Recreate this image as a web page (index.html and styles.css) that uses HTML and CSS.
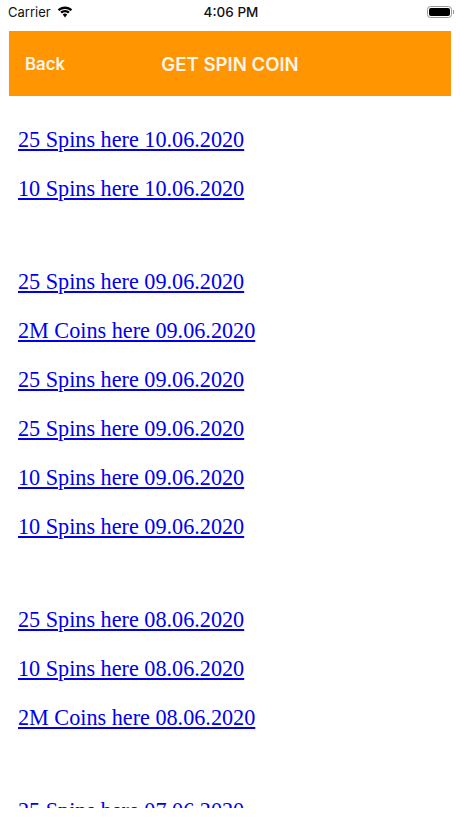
FILE: index.html
```html
<!DOCTYPE html>
<html lang="en">
<head>
    <meta charset="UTF-8">
    <meta name="viewport" content="width=device-width, initial-scale=1.0">
    <title>Get Spin Coin</title>
    <link rel="stylesheet" href="styles.css">
</head>
<body>
    <div class="status-bar">
        <div class="status-left">
            <span class="carrier">Carrier</span>
            <svg class="wifi" viewBox="0 0 18 13" width="16" height="12">
                <path d="M9 3c2.400 0 4.600.9 6.300 2.500L17.200 3.600C15 1.500 12.200.2 9 .2S3 1.500.8 3.600l1.900 1.900C4.400 3.900 6.600 3 9 3z"/>
                <path d="M9 6.900c1.300 0 2.500.5 3.400 1.300l1.900-1.900C12.900 5 11 4.200 9 4.200S5.100 5 3.700 6.300l1.900 1.900c.9-.8 2.100-1.300 3.400-1.300z"/>
                <path d="M9 8.300c-1 0-1.800.4-2.500 1L9 12.800l2.500-3.500c-.7-.6-1.500-1-2.500-1z"/>
            </svg>
        </div>
        <div class="status-time">4:06 PM</div>
        <div class="status-right">
            <div class="battery"><div class="battery-fill"></div></div>
            <div class="battery-cap"></div>
        </div>
    </div>

    <div class="header">
        <a class="back">Back</a>
        <h1>GET SPIN COIN</h1>
    </div>

    <div class="content">
        <div class="group">
            <p><a href="#">25 Spins here 10.06.2020</a></p>
            <p><a href="#">10 Spins here 10.06.2020</a></p>
        </div>
        <div class="group">
            <p><a href="#">25 Spins here 09.06.2020</a></p>
            <p><a href="#">2M Coins here 09.06.2020</a></p>
            <p><a href="#">25 Spins here 09.06.2020</a></p>
            <p><a href="#">25 Spins here 09.06.2020</a></p>
            <p><a href="#">10 Spins here 09.06.2020</a></p>
            <p><a href="#">10 Spins here 09.06.2020</a></p>
        </div>
        <div class="group">
            <p><a href="#">25 Spins here 08.06.2020</a></p>
            <p><a href="#">10 Spins here 08.06.2020</a></p>
            <p><a href="#">2M Coins here 08.06.2020</a></p>
        </div>
        <div class="group">
            <p><a href="#">25 Spins here 07.06.2020</a></p>
        </div>
    </div>
</body>
</html>
```

FILE: styles.css
```css
html, body {
    margin: 0;
    padding: 0;
    height: 818px;
    overflow: hidden;
    background-color: #fff;
}
.status-bar {
    height: 31px;
    padding: 0 6px 7px 8px;
    box-sizing: border-box;
    display: grid;
    grid-template-columns: 1fr auto 1fr;
    align-items: center;
    font-family: Inter, "Liberation Sans", sans-serif;
    font-size: 13.500px;
    color: #111;
}
.status-left {
    display: flex;
    align-items: center;
    gap: 6px;
}
.carrier {
    font-size: 13px;
}
.wifi {
    fill: #000;
}
.status-time {
    font-weight: 500;
}
.status-right {
    display: flex;
    align-items: center;
    justify-content: flex-end;
    gap: 1px;
}
.battery {
    width: 25px;
    height: 12px;
    box-sizing: border-box;
    border: 1px solid #999;
    border-radius: 3.500px;
    padding: 1px;
}
.battery-fill {
    height: 100%;
    background: #000;
    border-radius: 2px;
}
.battery-cap {
    width: 1px;
    height: 4px;
    background: #999;
}
.header {
    height: 65px;
    margin: 0 9px;
    background: #ff9500;
    color: #fff;
    font-family: Inter, "Liberation Sans", sans-serif;
    position: relative;
    display: flex;
    align-items: center;
    justify-content: center;
}
.header h1 {
    margin: 0;
    font-size: 18.600px;
    font-weight: 600;
    opacity: 0.92;
}
.back {
    position: absolute;
    left: 16px;
    font-size: 16.800px;
    font-weight: 600;
    opacity: 0.92;
}
.content {
    height: 712px;
    overflow: hidden;
    padding: 11px 18px 0;
    box-sizing: border-box;
    font-family: "Liberation Serif", serif;
    font-size: 22.200px;
}
.content p {
    margin: 0;
    padding-top: 20px;
    height: 49px;
    box-sizing: border-box;
}
.group + .group {
    margin-top: 44px;
}
a[href] {
    color: #0000ee;
}
```
